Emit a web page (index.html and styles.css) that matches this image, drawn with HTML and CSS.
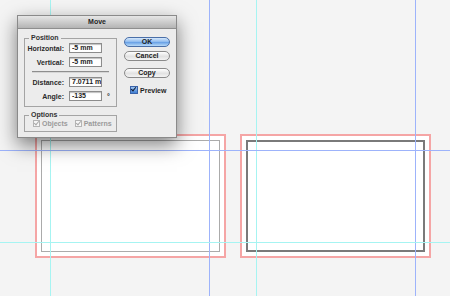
FILE: index.html
```html
<!DOCTYPE html>
<html lang="en">
<head>
    <meta charset="UTF-8">
    <title>Move</title>
    <link rel="stylesheet" href="styles.css">
</head>
<body>

<div class="canvas">
    <!-- artboards with bleed -->
    <div class="boards">
        <div class="bleed">
            <div class="art"></div>
        </div>
        <div class="bleed">
            <div class="art selected"></div>
        </div>
    </div>

    <!-- guides -->
    <div class="guide v cyan" style="left: 50px"></div>
    <div class="guide v cyan" style="left: 256px"></div>
    <div class="guide v blue" style="left: 209px"></div>
    <div class="guide v blue" style="left: 415px"></div>
    <div class="guide h blue" style="top: 150px"></div>
    <div class="guide h cyan" style="top: 242px"></div>

    <!-- Move dialog -->
    <div class="dialog">
        <div class="titlebar">Move</div>
        <div class="dialog-body">
            <div class="left-col">
                <fieldset class="group">
                    <legend>Position</legend>
                    <div class="row">
                        <label>Horizontal:</label>
                        <div class="field">-5 mm</div>
                    </div>
                    <div class="row">
                        <label>Vertical:</label>
                        <div class="field">-5 mm</div>
                    </div>
                    <div class="sep"></div>
                    <div class="row">
                        <label>Distance:</label>
                        <div class="field">7.0711 mm</div>
                    </div>
                    <div class="row">
                        <label>Angle:</label>
                        <div class="field">-135</div>
                        <span class="unit">°</span>
                    </div>
                </fieldset>
                <fieldset class="group options">
                    <legend>Options</legend>
                    <div class="checks">
                        <span class="check disabled"><i class="box"></i>Objects</span>
                        <span class="check disabled"><i class="box"></i>Patterns</span>
                    </div>
                </fieldset>
            </div>
            <div class="right-col">
                <button class="btn default">OK</button>
                <button class="btn">Cancel</button>
                <button class="btn copy">Copy</button>
                <span class="check preview"><i class="box on"></i>Preview</span>
            </div>
        </div>
    </div>
</div>

</body>
</html>
```

FILE: styles.css
```css
body {
    margin: 0;
    background-color: #f4f4f4;
    font-family: 'Liberation Sans', Arial, sans-serif;
    overflow: hidden;
}

.canvas {
    position: relative;
    width: 450px;
    height: 296px;
}

.boards {
    display: flex;
    gap: 14px;
    padding: 134px 0 0 35px;
}

.bleed {
    width: 191px;
    height: 124px;
    box-sizing: border-box;
    border: 2px solid #f5a5a5;
    background-color: #ffffff;
    padding: 4px;
}

.art {
    height: 100%;
    box-sizing: border-box;
    border: 1px solid #ababab;
}

.art.selected {
    border: 2px solid #7a7a7a;
}

.guide {
    position: absolute;
}

.guide.v {
    top: 0;
    bottom: 0;
    width: 1px;
}

.guide.h {
    left: 0;
    right: 0;
    height: 1px;
}

.cyan {
    background-color: #a6f4f2;
}

.blue {
    background-color: #9db3fb;
}

/* dialog window */
.dialog {
    position: absolute;
    left: 17px;
    top: 15px;
    width: 160px;
    height: 123px;
    background-color: #ececec;
    border: 1px solid #8a8a8a;
    box-sizing: border-box;
    box-shadow: 0 7px 18px rgba(0, 0, 0, 0.5);
    font-size: 7px;
    color: #1e1e1e;
}

.titlebar {
    height: 12px;
    line-height: 12px;
    text-align: center;
    font-weight: bold;
    font-size: 7px;
    background: linear-gradient(#e6e6e6, #b4b4b4);
    border-bottom: 1px solid #8e8e8e;
}

.dialog-body {
    display: flex;
    padding: 5px 0 0 6px;
    gap: 7px;
}

.left-col {
    display: flex;
    flex-direction: column;
    gap: 4px;
    width: 93px;
}

.group {
    margin: 0;
    padding: 1px 0 5px 0;
    border: 1px solid #a4a4a4;
    min-width: 0;
}

.group legend {
    padding: 0 2px;
    margin-left: 4px;
    line-height: 8px;
    font-weight: bold;
    color: #333;
}

.row {
    display: grid;
    grid-template-columns: 39px 33px auto;
    column-gap: 5px;
    align-items: center;
    margin-top: 4px;
}

.row:first-of-type {
    margin-top: 0;
}

.row label {
    text-align: right;
    font-weight: bold;
    color: #2a2a2a;
}

.field {
    height: 8px;
    line-height: 8px;
    padding: 0 2px;
    background-color: #ffffff;
    border: 1px solid #8c8c8c;
    box-shadow: inset 0 1px 1px rgba(0, 0, 0, 0.25);
    overflow: hidden;
    white-space: nowrap;
    font-weight: bold;
    color: #222;
}

.unit {
    font-weight: bold;
}

.sep {
    height: 1px;
    margin: 4px 7px 3px 7px;
    background-color: #8e8e8e;
    border-bottom: 1px solid #d6d6d6;
}

.options {
    padding-bottom: 4px;
}

.checks {
    display: flex;
    gap: 7px;
    padding-left: 8px;
}

.check {
    display: flex;
    align-items: center;
    gap: 2px;
    font-weight: bold;
}

.check.disabled {
    color: #9a9a9a;
}

.box {
    display: inline-block;
    width: 5px;
    height: 5px;
    border: 1px solid #b4b4b4;
    background-color: #f6f6f6;
    position: relative;
}

.box::after {
    content: '';
    position: absolute;
    left: 1px;
    top: -1px;
    width: 2px;
    height: 4px;
    border: solid #a8a8a8;
    border-width: 0 1px 1px 0;
    transform: rotate(40deg);
}

.box.on {
    width: 6px;
    height: 6px;
    border-color: #3a62a8;
    background: linear-gradient(#9cc4f2, #3f7fd4);
}

.box.on::after {
    border-color: #101a30;
    border-width: 0 1.5px 1.5px 0;
}

.right-col {
    display: flex;
    flex-direction: column;
    align-items: center;
    width: 46px;
    padding-top: 3px;
}

.btn {
    width: 46px;
    height: 10px;
    padding: 0;
    margin: 0 0 4px 0;
    border: 1px solid #8a8a8a;
    border-radius: 5px;
    background: linear-gradient(#ffffff, #e2e2e2 55%, #f4f4f4);
    font-family: 'Liberation Sans', Arial, sans-serif;
    font-size: 7px;
    font-weight: bold;
    line-height: 8px;
    color: #222;
}

.btn.default {
    border-color: #4a6fa8;
    background: linear-gradient(#d6e8fb, #8ab8ee 50%, #6aa2e6 55%, #b8daf8);
}

.btn.copy {
    margin-top: 3px;
}

.check.preview {
    margin-top: 4px;
    padding-left: 6px;
    align-self: flex-start;
}
```
